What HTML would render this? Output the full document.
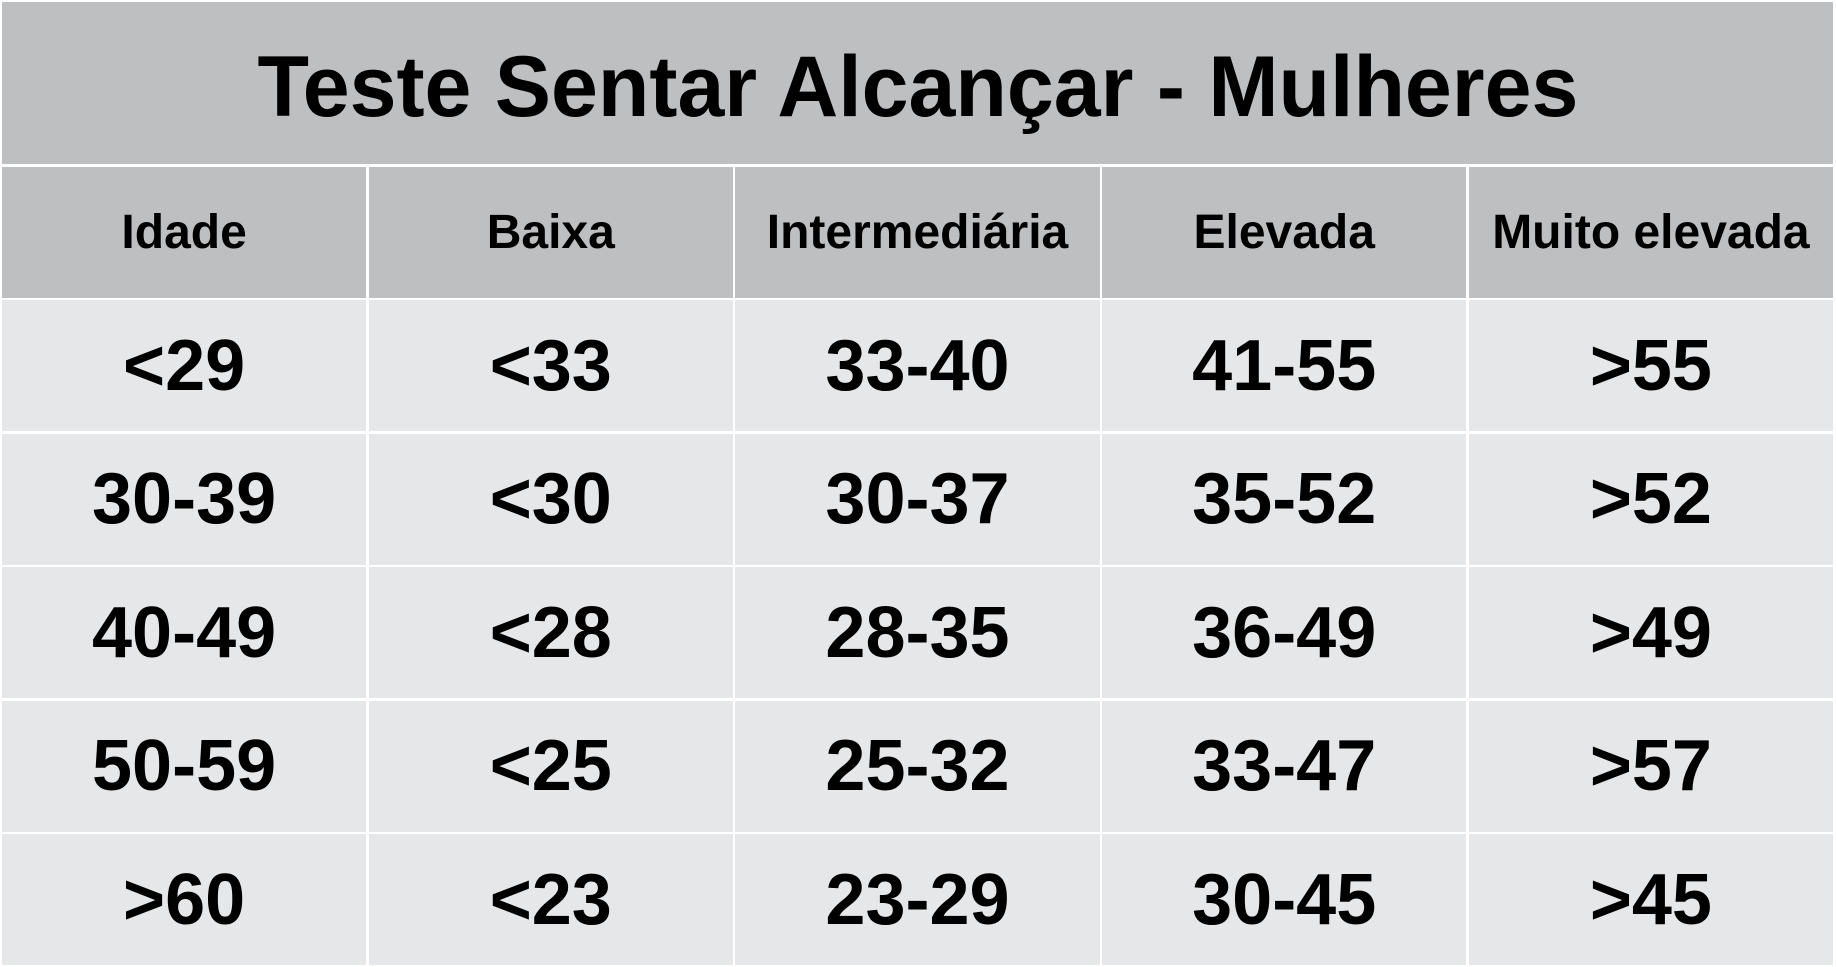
<!DOCTYPE html>
<html><head><meta charset="utf-8"><style>
html,body{margin:0;padding:0;background:#fff;width:1836px;height:967px;overflow:hidden}
.g{position:absolute;left:2px;top:2px;width:1831px;display:grid;grid-template-columns:repeat(5,1fr);grid-template-rows:162px 131px repeat(5,131px);gap:2.5px;font-family:"Liberation Sans",sans-serif;font-weight:bold;color:#000}
.g div{display:flex;align-items:center;justify-content:center}
.t{grid-column:1/6;background:#bebfc1;font-size:86px}
.t span{display:inline-block;transform:translateY(4px) scaleX(0.98)}
.h{background:#bebfc1;font-size:48px}
.c{background:#e6e7e8;font-size:72px}
</style></head><body>
<div class="g">
<div class="t"><span>Teste Sentar Alcançar - Mulheres</span></div>
<div class="h">Idade</div><div class="h">Baixa</div><div class="h">Intermediária</div><div class="h">Elevada</div><div class="h">Muito elevada</div>
<div class="c">&lt;29</div><div class="c">&lt;33</div><div class="c">33-40</div><div class="c">41-55</div><div class="c">&gt;55</div>
<div class="c">30-39</div><div class="c">&lt;30</div><div class="c">30-37</div><div class="c">35-52</div><div class="c">&gt;52</div>
<div class="c">40-49</div><div class="c">&lt;28</div><div class="c">28-35</div><div class="c">36-49</div><div class="c">&gt;49</div>
<div class="c">50-59</div><div class="c">&lt;25</div><div class="c">25-32</div><div class="c">33-47</div><div class="c">&gt;57</div>
<div class="c">&gt;60</div><div class="c">&lt;23</div><div class="c">23-29</div><div class="c">30-45</div><div class="c">&gt;45</div>
</div>
</body></html>
